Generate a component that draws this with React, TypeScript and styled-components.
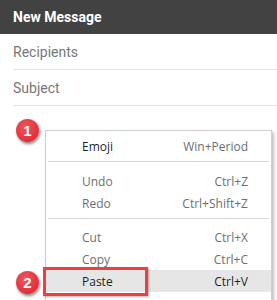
import React from "react";
import styled, { createGlobalStyle } from "styled-components";

const Global = createGlobalStyle`
  html, body { margin: 0; padding: 0; background: #fff; }
  body { width: 277px; height: 300px; overflow: hidden; }
`;

const Page = styled.div`
  width: 277px;
  height: 300px;
  position: relative;
  overflow: hidden;
  font-family: Roboto, "Liberation Sans", sans-serif;
`;

const Header = styled.div`
  height: 34px;
  background: #424242;
  color: #fff;
  font-weight: 700;
  font-size: 14px;
  display: flex;
  align-items: center;
  padding-left: 13px;
`;

const Field = styled.div`
  margin-left: 13px;
  height: 35px;
  border-bottom: 1px solid #e4e4e4;
  display: flex;
  align-items: center;
  color: #777;
  font-size: 14px;
`;

const MenuArea = styled.div`
  position: relative;
  padding-top: 24px;
  padding-left: 45px;
`;

const Menu = styled.div`
  width: 225px;
  border: 1px solid #cfcfcf;
  background: #fff;
  box-shadow: 2px 2px 3px rgba(0, 0, 0, 0.25);
  padding-top: 4px;
  padding-bottom: 10px;
  font-family: "Open Sans", "Noto Sans", sans-serif;
  font-size: 12px;
`;

const Item = styled.div<{ $tone: "dark" | "muted"; $hover?: boolean }>`
  height: 22px;
  display: flex;
  align-items: center;
  justify-content: space-between;
  padding-left: 36px;
  padding-right: 23px;
  color: ${(p) => (p.$tone === "dark" ? "#1f1f1f" : "#6e6e6e")};
  background: ${(p) => (p.$hover ? "#e6e6e6" : "transparent")};
`;

const Shortcut = styled.span<{ $tone: "dark" | "muted" }>`
  color: ${(p) => (p.$tone === "dark" ? "#1f1f1f" : "#6e6e6e")};
`;

const Separator = styled.div<{ $top: number; $bottom: number }>`
  height: 1px;
  background: #d6d6d6;
  margin: ${(p) => p.$top}px 2px ${(p) => p.$bottom}px 2px;
`;

const Badge = styled.div<{ $top: number }>`
  position: absolute;
  left: 16px;
  top: ${(p) => p.$top}px;
  width: 23px;
  height: 23px;
  border-radius: 50%;
  background: radial-gradient(circle at 40% 35%, #f2545a, #e0313a 70%);
  box-shadow: 1px 2px 3px rgba(0, 0, 0, 0.45);
  color: #fff;
  font-family: "Liberation Sans", Arial, sans-serif;
  font-weight: 700;
  font-size: 15px;
  display: flex;
  align-items: center;
  justify-content: center;
`;

const Highlight = styled.div`
  position: absolute;
  left: 43px;
  top: 161px;
  width: 99px;
  height: 23px;
  border: 3px solid #ea4040;
  box-shadow: 1px 1px 2px rgba(0, 0, 0, 0.3);
`;

export default function App() {
  return (
    <>
      <Global />
      <Page>
        <Header>New Message</Header>
        <Field>Recipients</Field>
        <Field>Subject</Field>
        <MenuArea>
          <Menu>
            <Item $tone="dark">
              <span>Emoji</span>
              <Shortcut $tone="muted">Win+Period</Shortcut>
            </Item>
            <Separator $top={4} $bottom={8} />
            <Item $tone="muted">
              <span>Undo</span>
              <Shortcut $tone="muted">Ctrl+Z</Shortcut>
            </Item>
            <Item $tone="muted">
              <span>Redo</span>
              <Shortcut $tone="muted">Ctrl+Shift+Z</Shortcut>
            </Item>
            <Separator $top={4} $bottom={7} />
            <Item $tone="muted">
              <span>Cut</span>
              <Shortcut $tone="muted">Ctrl+X</Shortcut>
            </Item>
            <Item $tone="muted">
              <span>Copy</span>
              <Shortcut $tone="muted">Ctrl+C</Shortcut>
            </Item>
            <Item $tone="dark" $hover>
              <span>Paste</span>
              <Shortcut $tone="dark">Ctrl+V</Shortcut>
            </Item>
          </Menu>
          <Badge $top={13}>1</Badge>
          <Badge $top={165}>2</Badge>
          <Highlight />
        </MenuArea>
      </Page>
    </>
  );
}
